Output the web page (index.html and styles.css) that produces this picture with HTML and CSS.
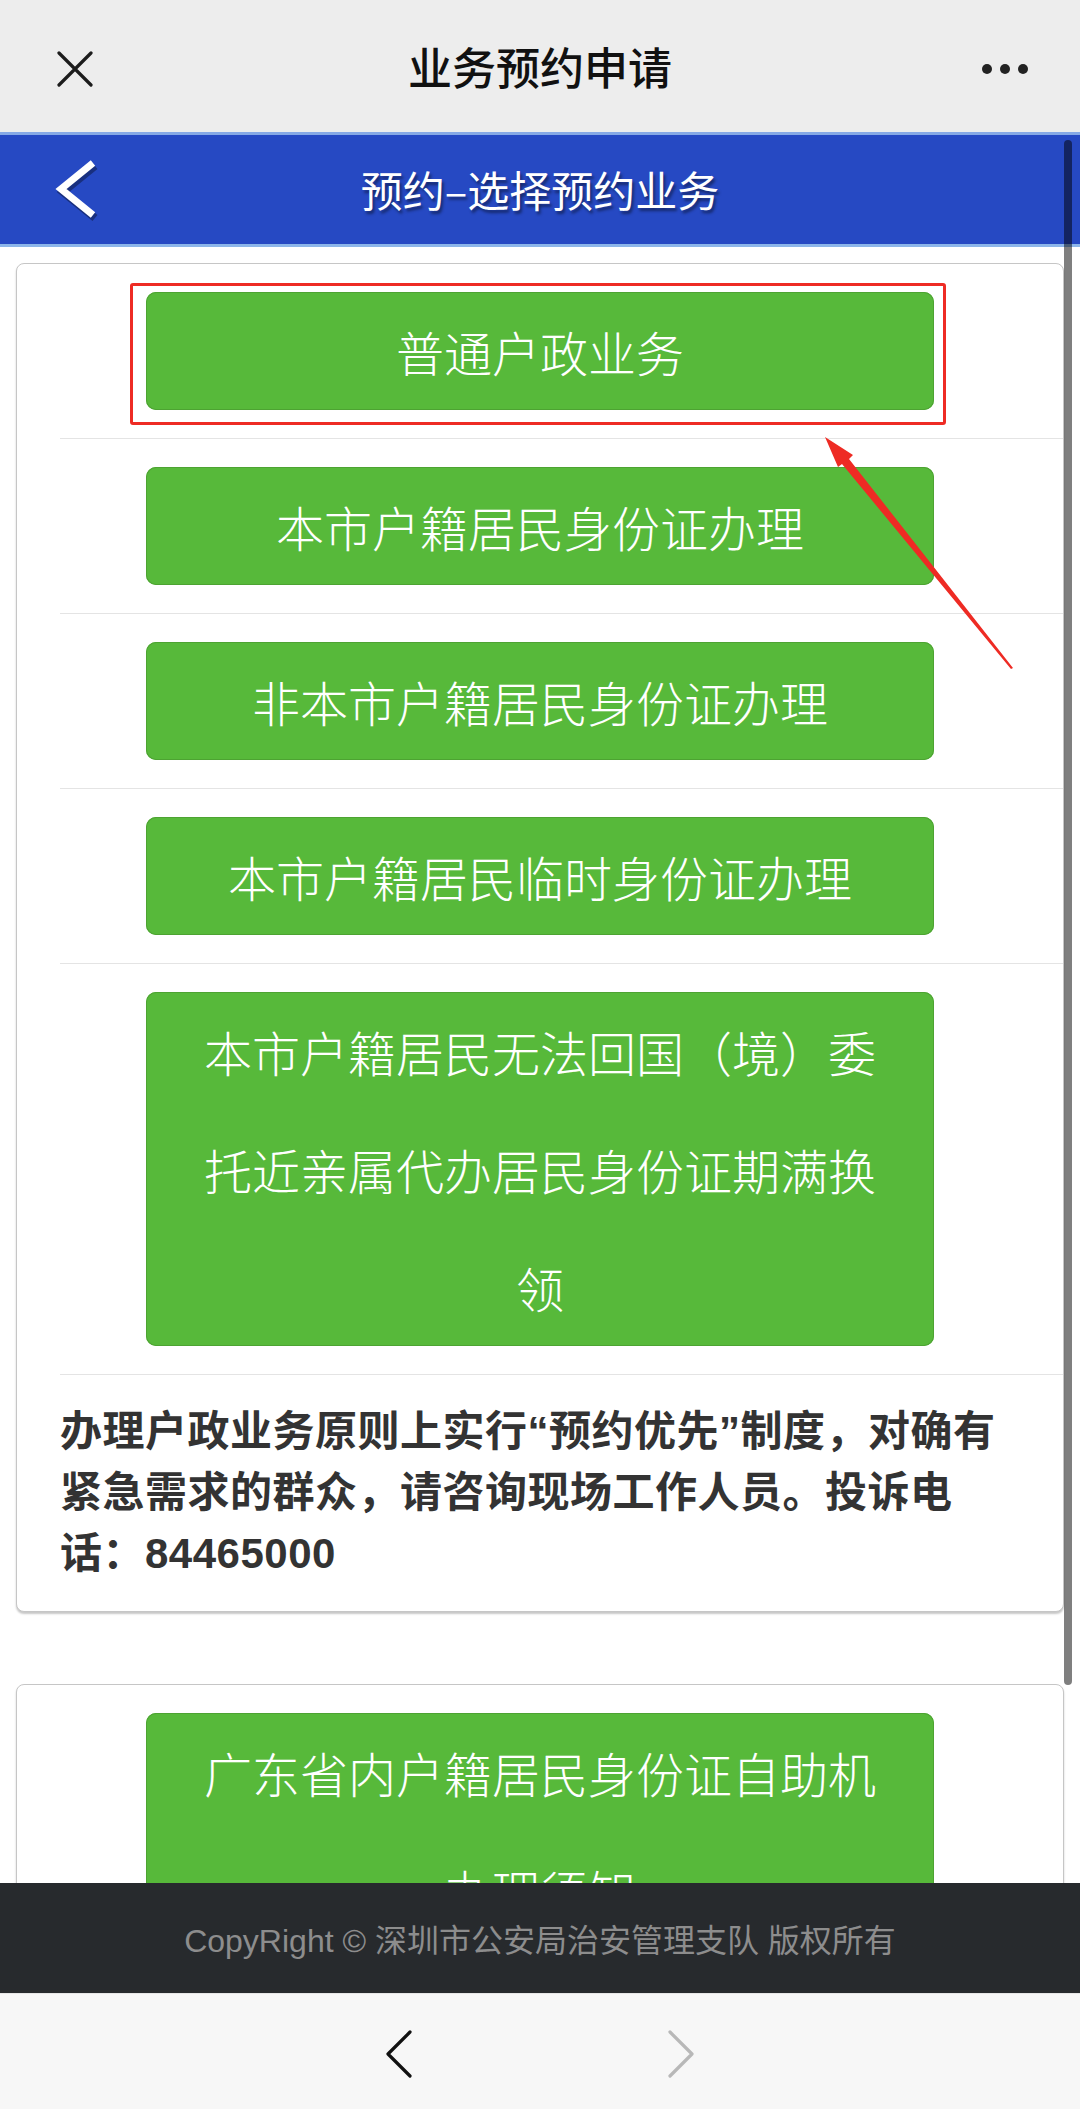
FILE: index.html
```html
<!DOCTYPE html>
<html lang="zh-CN">
<head>
<meta charset="utf-8">
<title>业务预约申请</title>
<link rel="stylesheet" href="styles.css">
</head>
<body>
<div class="phone">
  <div class="topbar">
    <div class="tb-left">
      <svg class="close-icon" width="36" height="36" viewBox="0 0 36 36"><path d="M2 2 L34 34 M34 2 L2 34" stroke="#1c1c1c" stroke-width="3.2" stroke-linecap="round" fill="none"/></svg>
    </div>
    <div class="tb-title">业务预约申请</div>
    <div class="tb-right">
      <span class="dot"></span><span class="dot"></span><span class="dot"></span>
    </div>
  </div>

  <div class="webview">
    <div class="appbar">
      <div class="ab-left">
        <svg class="back-icon" width="50" height="64" viewBox="0 0 50 64"><polyline points="40,5 8,31 40,57" stroke="rgba(0,0,0,0.35)" stroke-width="8" fill="none" stroke-linejoin="miter" transform="translate(2,3)"/><polyline points="40,5 8,31 40,57" stroke="#ffffff" stroke-width="7" fill="none" stroke-linejoin="miter"/></svg>
      </div>
      <div class="ab-title">预约–选择预约业务</div>
      <div class="ab-right"></div>
    </div>

    <div class="content">
      <div class="card">
        <div class="item"><div class="btn">普通户政业务</div></div>
        <div class="sep"></div>
        <div class="item"><div class="btn">本市户籍居民身份证办理</div></div>
        <div class="sep"></div>
        <div class="item"><div class="btn">非本市户籍居民身份证办理</div></div>
        <div class="sep"></div>
        <div class="item"><div class="btn">本市户籍居民临时身份证办理</div></div>
        <div class="sep"></div>
        <div class="item"><div class="btn">本市户籍居民无法回国（境）委托近亲属代办居民身份证期满换领</div></div>
        <div class="sep"></div>
        <p class="note">办理户政业务原则上实行“预约优先”制度，对确有紧急需求的群众，请咨询现场工作人员。投诉电话：84465000</p>
      </div>

      <div class="card card-second">
        <div class="item"><div class="btn">广东省内户籍居民身份证自助机办理须知</div></div>
      </div>
    </div>

    <div class="scrollbar"></div>
  </div>

  <div class="footer">CopyRight © 深圳市公安局治安管理支队 版权所有</div>

  <div class="navbar">
    <svg class="nav-back" width="30" height="50" viewBox="0 0 30 50"><polyline points="26,3 4,25 26,47" stroke="#111111" stroke-width="3.2" fill="none" stroke-linecap="round" stroke-linejoin="round"/></svg>
    <svg class="nav-fwd" width="30" height="50" viewBox="0 0 30 50"><polyline points="4,3 26,25 4,47" stroke="#b8b8b8" stroke-width="3.2" fill="none" stroke-linecap="round" stroke-linejoin="round"/></svg>
  </div>

  <div class="mark-box"></div>
  <svg class="mark-arrow" width="1080" height="2109" viewBox="0 0 1080 2109">
    <polygon points="825,437 853,455 849,459 1013,668 1011,669 842,464 838,467" fill="#ee2b24"/>
  </svg>
</div>
</body>
</html>
```

FILE: styles.css
```css
* {
  box-sizing: border-box;
}

html, body {
  margin: 0;
  padding: 0;
  background: #ffffff;
}

body {
  font-family: "Liberation Sans", "Noto Sans CJK SC", sans-serif;
  overflow: hidden;
}

.phone {
  position: relative;
  width: 1080px;
  height: 2109px;
  display: flex;
  flex-direction: column;
  overflow: hidden;
}

/* top WeChat-like bar */
.topbar {
  height: 132px;
  flex: none;
  background: #ededed;
  display: grid;
  grid-template-columns: 1fr auto 1fr;
  align-items: center;
}

.tb-left {
  padding-left: 57px;
  display: flex;
  align-items: center;
  padding-top: 6px;
}

.tb-title {
  font-family: "Noto Sans CJK SC", sans-serif;
  font-size: 44px;
  font-weight: 500;
  color: #111111;
}

.tb-right {
  display: flex;
  justify-content: flex-end;
  gap: 8px;
  padding-right: 52px;
  padding-top: 6px;
}

.dot {
  width: 10px;
  height: 10px;
  border-radius: 50%;
  background: #222222;
}

/* webview */
.webview {
  position: relative;
  flex: 1;
  overflow: hidden;
  background: #ffffff;
}

.appbar {
  height: 115px;
  background: #2649c3;
  border-top: 3px solid #86a9e6;
  border-bottom: 3px solid #8cb6ea;
  display: grid;
  grid-template-columns: 1fr auto 1fr;
  align-items: center;
}

.ab-left {
  padding-left: 53px;
  display: flex;
  align-items: center;
}

.ab-title {
  font-family: "Noto Sans CJK SC", sans-serif;
  font-size: 42px;
  color: #ffffff;
  text-shadow: 2px 3px 3px rgba(0, 0, 0, 0.45);
  padding-bottom: 2px;
}

.content {
  padding: 16px 16px 0 16px;
}

.card {
  background: #ffffff;
  border: 1px solid #c6c6c6;
  border-radius: 8px;
  box-shadow: 0 2px 2px rgba(0, 0, 0, 0.22);
}

.card-second {
  margin-top: 72px;
}

.item {
  padding: 28px 0;
  display: flex;
  justify-content: center;
}

.btn {
  width: 788px;
  padding: 0 40px;
  background: #57b93a;
  border-radius: 10px;
  box-shadow: inset 0 0 0 1px #4da332;
  color: #ffffff;
  font-family: "Noto Sans CJK SC", sans-serif;
  font-weight: 300;
  font-size: 48px;
  line-height: 118px;
  text-align: center;
}

.sep {
  height: 1px;
  margin-left: 43px;
  background: #e4e4e4;
}

.note {
  margin: 0 0 0 43px;
  padding: 26px 50px 27px 0;
  font-size: 42px;
  line-height: 61px;
  font-weight: 700;
  color: #333333;
  letter-spacing: 0.5px;
}

.scrollbar {
  position: absolute;
  top: 8px;
  left: 1064px;
  width: 8px;
  height: 1545px;
  border-radius: 4px;
  background: rgba(0, 0, 0, 0.5);
}

/* page footer */
.footer {
  height: 110px;
  flex: none;
  background: #272a2d;
  color: #8d8d8d;
  font-size: 32px;
  display: flex;
  align-items: center;
  justify-content: center;
}

/* browser bottom nav */
.navbar {
  height: 116px;
  flex: none;
  background: #f7f7f7;
  border-top: 1px solid #e6e6e6;
  display: flex;
  align-items: center;
  justify-content: center;
  gap: 252px;
  padding-top: 4px;
}

/* annotations */
.mark-box {
  position: absolute;
  left: 130px;
  top: 283px;
  width: 816px;
  height: 142px;
  border: 3px solid #ee2b24;
  border-radius: 3px;
  pointer-events: none;
}

.mark-arrow {
  position: absolute;
  left: 0;
  top: 0;
  pointer-events: none;
}
```
